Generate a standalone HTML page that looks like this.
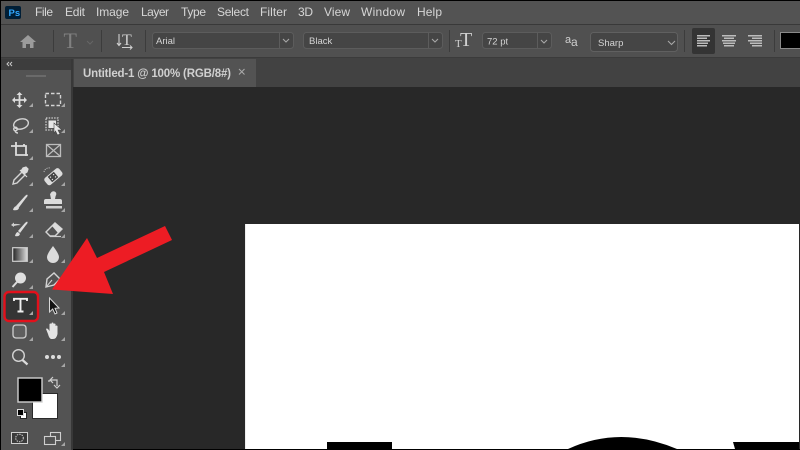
<!DOCTYPE html>
<html><head><meta charset="utf-8"><style>
html,body{margin:0;padding:0;background:#000;width:800px;height:450px;overflow:hidden}
svg{display:block}
text{font-family:"Liberation Sans",sans-serif}
.m{font-size:12px;fill:#d6d6d6}
.f{font-size:9.5px;fill:#d4d4d4}
.i{fill:none;stroke:#d4d4d4;stroke-width:1.4}
.c{fill:none;stroke:#a8a8a8;stroke-width:1.1}
</style></head><body>
<svg width="800" height="450" viewBox="0 0 800 450" xmlns="http://www.w3.org/2000/svg">
<rect width="800" height="450" fill="#000"/>
<!-- menu -->
<rect x="1" y="1" width="799" height="23" fill="#535353"/>
<rect x="1" y="24" width="799" height="1" fill="#393939"/>
<rect x="5" y="6" width="16" height="13" rx="2" fill="#001e36"/>
<text x="8.500" y="16" font-size="9.500" font-weight="bold" fill="#31a8ff">Ps</text>
<text class="m" x="35" y="16" textLength="18">File</text>
<text class="m" x="65" y="16" textLength="20">Edit</text>
<text class="m" x="96" y="16" textLength="33">Image</text>
<text class="m" x="141" y="16" textLength="28">Layer</text>
<text class="m" x="181" y="16" textLength="25">Type</text>
<text class="m" x="217" y="16" textLength="32">Select</text>
<text class="m" x="260" y="16" textLength="27">Filter</text>
<text class="m" x="298" y="16" textLength="15">3D</text>
<text class="m" x="324" y="16" textLength="26">View</text>
<text class="m" x="361" y="16" textLength="44">Window</text>
<text class="m" x="417" y="16" textLength="25">Help</text>
<!-- options -->
<rect x="1" y="25" width="799" height="32" fill="#505050"/>
<rect x="1" y="57" width="799" height="1" fill="#3b3b3b"/>
<g fill="#3c3c3c"><rect x="53" y="30" width="1" height="22"/><rect x="101" y="30" width="1" height="22"/><rect x="145" y="30" width="1" height="22"/><rect x="449" y="30" width="1" height="22"/><rect x="684" y="30" width="1" height="22"/><rect x="774" y="30" width="1" height="22"/></g>
<path d="M28 35 L36 42 H33.500 V48 H30 V44 H26 V48 H22.500 V42 H20 Z" fill="#9b9b9b"/>
<text x="63.500" y="48" font-size="22" style="font-family:'Liberation Serif',serif" fill="#808080">T</text>
<path d="M87 41 l3 3 l3-3" fill="none" stroke="#666" stroke-width="1"/>
<text x="122" y="45" font-size="16" style="font-family:'Liberation Serif',serif" fill="#d0d0d0">T</text>
<path d="M119 34 V45 M117 43 l2 2.500 l2-2.500 M122 47.500 H132 M130 45.500 l2 2 l-2 2" fill="none" stroke="#d0d0d0" stroke-width="1.100"/>
<!-- fields -->
<rect x="152.500" y="32.500" width="141" height="16" rx="3" fill="#454545" stroke="#5c5c5c"/>
<rect x="279" y="33" width="1" height="15" fill="#5c5c5c"/>
<text class="f" x="156" y="44">Arial</text>
<path class="c" d="M283 39 l3 3 l3-3"/>
<rect x="303.500" y="32.500" width="139" height="16" rx="3" fill="#454545" stroke="#5c5c5c"/>
<rect x="428" y="33" width="1" height="15" fill="#5c5c5c"/>
<text class="f" x="309" y="44">Black</text>
<path class="c" d="M432 39 l3 3 l3-3"/>
<text x="460" y="46" font-size="20" style="font-family:'Liberation Serif',serif" fill="#d0d0d0">T</text>
<text x="455" y="47" font-size="11" style="font-family:'Liberation Serif',serif" fill="#d0d0d0">T</text>
<rect x="482.500" y="32.500" width="69" height="16" rx="3" fill="#454545" stroke="#5c5c5c"/>
<rect x="537" y="33" width="1" height="15" fill="#5c5c5c"/>
<text class="f" x="487" y="44.500">72 pt</text>
<path class="c" d="M541 40 l3 3 l3-3"/>
<text x="565" y="43" font-size="11" fill="#cfcfcf">a</text>
<text x="571" y="46" font-size="12" fill="#cfcfcf">a</text>
<rect x="590.500" y="32.500" width="87" height="19" rx="3" fill="#454545" stroke="#606060"/>
<text class="f" x="598" y="46">Sharp</text>
<path class="c" d="M668 41 l3.500 3.500 l3.500-3.500"/>
<rect x="692" y="28" width="23" height="26" rx="2" fill="#343434"/>
<g fill="#bdbdbd">
<rect x="697" y="35" width="13" height="1.500"/><rect x="697" y="37.500" width="10" height="1.500"/><rect x="697" y="40" width="13" height="1.500"/><rect x="697" y="42.500" width="11" height="1.500"/><rect x="697" y="45" width="10" height="1.500"/>
<rect x="722" y="35" width="14" height="1.500"/><rect x="724" y="37.500" width="10" height="1.500"/><rect x="722" y="40" width="14" height="1.500"/><rect x="723" y="42.500" width="12" height="1.500"/><rect x="724" y="45" width="10" height="1.500"/>
<rect x="748" y="35" width="14" height="1.500"/><rect x="752" y="37.500" width="10" height="1.500"/><rect x="748" y="40" width="14" height="1.500"/><rect x="750" y="42.500" width="12" height="1.500"/><rect x="752" y="45" width="10" height="1.500"/>
</g>
<rect x="780.500" y="32.500" width="20" height="16" fill="#000" stroke="#8a8a8a"/>
<!-- panel strip -->
<rect x="1" y="58" width="799" height="29" fill="#424242"/>
<rect x="1" y="59" width="70" height="11" fill="#3d3d3d"/>
<path d="M9 62 l-2 2 l2 2 M12 62 l-2 2 l2 2" fill="none" stroke="#c8c8c8" stroke-width="1"/>
<rect x="74" y="59" width="182" height="28" fill="#535353"/>
<text x="83" y="77" font-size="11.500" font-weight="bold" fill="#d0d0d0" textLength="148">Untitled-1 @ 100% (RGB/8#)</text>
<path d="M239 69 l5.500 5.500 M244.500 69 l-5.500 5.500" stroke="#aaa" stroke-width="1"/>
<!-- canvas -->
<rect x="73" y="87" width="727" height="363" fill="#282828"/>
<rect x="245" y="224" width="554" height="225" fill="#fff"/>
<rect x="245" y="224" width="1" height="225" fill="#eee"/>
<rect x="327" y="442" width="65" height="7" fill="#000"/>
<path d="M568 449 Q620 425 677 449 Z" fill="#000"/>
<path d="M733 442 H799 V449 H735 Z" fill="#000"/>
<rect x="0" y="449" width="800" height="1" fill="#000"/>
<!-- toolbar -->
<rect x="1" y="70" width="70" height="380" fill="#535353"/>
<rect x="71" y="59" width="2" height="391" fill="#383838"/>
<rect x="26" y="75" width="20" height="2" fill="#6a6a6a"/>
<!-- corner triangles -->
<g fill="#a6a6a6">
<path d="M33 103 v4 h-4 z"/>
<path d="M65 103 v4 h-4 z"/><path d="M33 129 v4 h-4 z"/><path d="M65 129 v4 h-4 z"/>
<path d="M33 156 v4 h-4 z"/><path d="M33 182 v4 h-4 z"/><path d="M65 182 v4 h-4 z"/>
<path d="M33 208 v4 h-4 z"/><path d="M65 208 v4 h-4 z"/>
<path d="M33 234 v4 h-4 z"/><path d="M65 234 v4 h-4 z"/>
<path d="M33 259 v4 h-4 z"/><path d="M65 259 v4 h-4 z"/>
<path d="M33 285 v4 h-4 z"/><path d="M65 285 v4 h-4 z"/>
<path d="M65 311 v4 h-4 z"/>
<path d="M33 337 v4 h-4 z"/><path d="M65 337 v4 h-4 z"/>
<path d="M65 363 v4 h-4 z"/>
<path d="M65 442 v4 h-4 z"/>
</g>
<!-- move -->
<path d="M19.500 94 V106 M13 100 H26" stroke="#dcdcdc" stroke-width="1.800" fill="none"/>
<path d="M19.500 92 l3 3 h-6 z M19.500 108 l3-3 h-6 z M12 100 l3-3 v6 z M27 100 l-3-3 v6 z" fill="#dcdcdc"/>
<!-- marquee -->
<rect x="45.500" y="93.500" width="15" height="12" class="i" stroke-dasharray="3.500 2"/>
<!-- lasso -->
<ellipse cx="21" cy="124" rx="7.500" ry="5" transform="rotate(-15 21 124)" class="i"/>
<circle cx="15.500" cy="129" r="1.800" class="i"/><path class="i" d="M15 131 q1 2 3 2"/>
<!-- object select -->
<rect x="46" y="118" width="12" height="12" fill="none" stroke="#cfcfcf" stroke-width="1.300" stroke-dasharray="1.500 1.200"/>
<rect x="48.500" y="120.500" width="7.500" height="7.500" fill="#e6e6e6"/>
<path d="M54 123 L62 130 H58 L60 134 L57.500 135 L55.500 131 L54 133.500 Z" fill="#e8e8e8" stroke="#444" stroke-width=".6"/>
<!-- crop -->
<path d="M11 146 H26 V156 M16 142 V155 H28 M24 144 V146" fill="none" stroke="#dcdcdc" stroke-width="1.800"/>
<!-- frame -->
<rect x="46.500" y="144.500" width="14" height="12" fill="none" stroke="#bdbdbd" stroke-width="1.300"/>
<path d="M46.500 144.500 L60.500 156.500 M60.500 144.500 L46.500 156.500" stroke="#bdbdbd" stroke-width="1.200"/>
<!-- eyedropper -->
<path d="M13 184 l1-4 l8-8 l3 3 l-8 8 z" class="i"/>
<path d="M20 170 l7 7 M23 168 l3-1 l2 2 l-1 3 l-3 2 l-3-3 z" fill="#dcdcdc" stroke="#dcdcdc" stroke-width="1.200"/>
<!-- healing -->
<g transform="rotate(-40 53 177)"><rect x="44" y="172.500" width="19" height="9" rx="2.500" fill="#dcdcdc"/><rect x="49" y="173.500" width="8" height="7" fill="#444"/><g fill="#ddd"><circle cx="51" cy="175.500" r=".7"/><circle cx="55" cy="175.500" r=".7"/><circle cx="51" cy="178.500" r=".7"/><circle cx="55" cy="178.500" r=".7"/></g></g>
<path d="M44 172 a5 5 0 0 1 6-4" fill="none" stroke="#bbb" stroke-width="1" stroke-dasharray="1.200 1"/>
<!-- brush -->
<path d="M16 206 L25 196 Q27 194 27.500 195 Q28 196 26 198 L18.500 208 Z" fill="#dcdcdc"/>
<path d="M13 210 q1-4 4-4 l2 2 q-1 3-6 2z" fill="#dcdcdc"/>
<!-- stamp -->
<path d="M51 193 h5 v1 l-1 5 h5 q2 0 2 2 v3 h-18 v-3 q0-2 2-2 h5 l-1-5z" fill="#dcdcdc"/>
<circle cx="53.500" cy="194" r="2.800" fill="#dcdcdc"/>
<rect x="46" y="206" width="16" height="2.500" fill="#cfcfcf"/>
<!-- history brush -->
<path d="M18 231 L25 223 Q27 221 27.500 222 Q28 223 26 225 L20 233 Z" fill="#dcdcdc"/>
<path d="M15 236 q1-4 3-4 l2 2 q-1 3-5 2z" fill="#dcdcdc"/>
<path d="M11 225 l3-2.500 v1.500 q4-.5 7 1 q-4 0-7 1 v1z" fill="#cfcfcf"/>
<!-- eraser -->
<path d="M46 232 L55 223 L62 229 L55 236 H50 Z" class="i"/>
<path d="M52 226 L55 223 L62 229 L58 233 Z" fill="#dcdcdc"/>
<path d="M50 236.500 H61" stroke="#cfcfcf" stroke-width="1.200"/>
<!-- gradient -->
<defs><linearGradient id="g"><stop offset="0" stop-color="#222"/><stop offset="1" stop-color="#ddd"/></linearGradient></defs>
<rect x="12.700" y="247.700" width="14.600" height="13.600" fill="url(#g)" stroke="#d0d0d0" stroke-width="1.200"/>
<!-- drop -->
<path d="M53 246 Q59 254 59 257 A6 6 0 0 1 47 257 Q47 254 53 246 Z" fill="#dcdcdc"/>
<!-- dodge -->
<circle cx="20.500" cy="278" r="5.500" fill="#e0e0e0"/>
<path d="M17 282 L12.500 287" stroke="#dcdcdc" stroke-width="2"/>
<!-- pen -->
<path d="M46 287 L47 279 L54 273 L60 279 L54 285 Z" class="i"/>
<path d="M47 286 L52 280" stroke="#d4d4d4" stroke-width="1"/>
<!-- type -->
<rect x="4.500" y="292" width="33.500" height="29" rx="4.500" fill="#353535" stroke="#e3101b" stroke-width="2.400"/>
<path d="M14 301 V298.800 H27 V301 M20.500 299 V311.500 M17.500 311.500 H23.500" fill="none" stroke="#f0f0f0" stroke-width="1.900"/>
<path d="M33 311 v4 h-4 z" fill="#a6a6a6"/>
<!-- path select -->
<path d="M49.500 298 L49.500 312 L52.700 309 L55 314 L57 313 L55 308.300 L59 308 Z" fill="#111" stroke="#d8d8d8" stroke-width="1"/>
<!-- shape -->
<rect x="13" y="325" width="13" height="13" rx="3" fill="#5f5f5f" stroke="#cfcfcf" stroke-width="1.300"/>
<!-- hand -->
<path d="M48 334 L46 329 Q46.500 328 48 329 L49.500 331 V324 Q50.500 323 51.500 324 V329 V323 Q52.500 322 53.500 323 V329 V324 Q54.500 323 55.500 324 V330 V326 Q56.500 325 57.500 326 V334 Q56.500 339 53 339 H51 Q49 338 48 334 Z" fill="#e4e4e4"/>
<!-- zoom -->
<circle cx="18.500" cy="355.500" r="5.800" class="i" stroke-width="1.500"/>
<path d="M22.500 360 L27.500 364.500" stroke="#dcdcdc" stroke-width="2.200"/>
<!-- more -->
<circle cx="47" cy="357" r="2" fill="#dcdcdc"/><circle cx="53" cy="357" r="2" fill="#dcdcdc"/><circle cx="59" cy="357" r="2" fill="#dcdcdc"/>
<!-- colors -->
<rect x="32.500" y="393.500" width="25" height="25" fill="#fff" stroke="#2a2a2a"/>
<rect x="18" y="378" width="24" height="24" fill="#000" stroke="#d0d0d0" stroke-width="1.400"/>
<path d="M50 380 H57 V386 M49 382 V380 M53 377 L50 380 L53 383 M54 385 L57 388 L60 385" fill="none" stroke="#d0d0d0" stroke-width="1.200"/>
<rect x="20.500" y="412.500" width="6" height="6" fill="#fff" stroke="#222"/>
<rect x="17.500" y="409.500" width="6" height="6" fill="#000" stroke="#ddd"/>
<!-- mask + screen -->
<rect x="11.500" y="432.500" width="16" height="11" fill="#3a3a3a" stroke="#cfcfcf" stroke-width="1"/>
<circle cx="19.500" cy="438" r="3.800" fill="none" stroke="#cfcfcf" stroke-width="1" stroke-dasharray="1.500 1"/>
<rect x="50.500" y="432.500" width="10" height="8" fill="#535353" stroke="#cfcfcf" stroke-width="1.100"/>
<rect x="44.500" y="436.500" width="11" height="8" fill="#535353" stroke="#cfcfcf" stroke-width="1.100"/>
<!-- arrow -->
<path d="M52 289.500 L87 238 L97 258 L165 226 L172 240 L104 272 L113 294 Z" fill="#ed1c24"/>
</svg>
</body></html>
